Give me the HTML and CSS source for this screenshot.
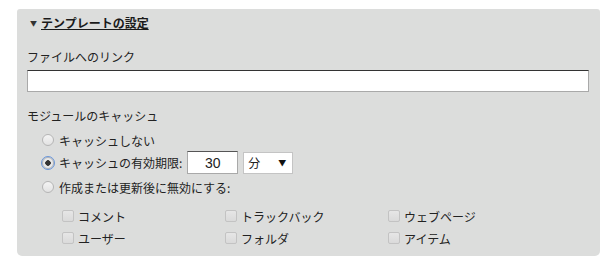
FILE: index.html
```html
<!DOCTYPE html>
<html>
  <head>
    <title>テンプレートの設定</title>
    <link rel="stylesheet" href="styles.css">
  </head>
  <body>
    <section class="panel">
      <h2 class="heading"><span class="arrow">▼</span><a href="#">テンプレートの設定</a></h2>

      <label class="label first">ファイルへのリンク</label>
      <input class="link-input" type="text">

      <div class="label second">モジュールのキャッシュ</div>
      <div class="options">
        <label class="opt row1"><input type="radio" name="cache"><span>キャッシュしない</span></label>
        <label class="opt row2"><input type="radio" name="cache" checked><span>キャッシュの有効期限:</span>
          <input class="num" type="text" value="30">
          <div class="select"><span>分</span><span class="caret">▼</span></div>
        </label>
        <label class="opt row3"><input type="radio" name="cache"><span>作成または更新後に無効にする:</span></label>
      </div>

      <div class="checks">
        <label class="chk"><input type="checkbox"><span>コメント</span></label>
        <label class="chk"><input type="checkbox"><span>トラックバック</span></label>
        <label class="chk"><input type="checkbox"><span>ウェブページ</span></label>
        <label class="chk"><input type="checkbox"><span>ユーザー</span></label>
        <label class="chk"><input type="checkbox"><span>フォルダ</span></label>
        <label class="chk"><input type="checkbox"><span>アイテム</span></label>
      </div>
    </section>
  </body>
</html>
```

FILE: styles.css
```css
body {
  margin: 0;
  font-family: "Noto Sans CJK JP", "Liberation Sans", sans-serif;
  font-size: 12px;
  color: #222;
  background: #fff;
}

.panel {
  margin: 9px 0 0 17px;
  width: 583px;
  height: 247px;
  box-sizing: border-box;
  padding: 4px 10px 0 10px;
  background: #dcdddc;
  border-radius: 3px 3px 5px 5px;
}

.heading {
  margin: 0;
  font-size: 12px;
  line-height: 20px;
  font-weight: bold;
  display: flex;
  align-items: center;
}

.heading .arrow {
  font-size: 7px;
  margin: 0 4px 0 3px;
  color: #333;
}

.heading a {
  color: #1a1a1a;
  text-decoration: underline;
}

.label {
  display: block;
  line-height: 18px;
}

.label.first {
  margin-top: 15px;
}

.label.second {
  margin-top: 14px;
  line-height: 20px;
}

.link-input {
  display: block;
  margin: 4px 0 0 0;
  width: 562px;
  height: 22px;
  box-sizing: border-box;
  border: 1px solid #a9a9a9;
  border-top-color: #333;
  background: #fff;
  padding: 0 4px;
}

.options {
  padding-left: 15px;
}

.opt {
  display: flex;
  align-items: center;
  height: 20px;
}

.opt.row1 {
  margin-top: 4px;
}

.opt.row2 {
  height: 23px;
  margin-top: 1px;
}

.opt.row3 {
  margin-top: 3px;
}

.opt input[type="radio"] {
  appearance: none;
  margin: 0 5px 0 0;
  width: 12px;
  height: 12px;
  border: 1px solid #b5b5b5;
  border-radius: 50%;
  background: linear-gradient(#f4f4f4, #e2e2e2);
  box-sizing: border-box;
}

.opt input[type="radio"]:checked {
  background: radial-gradient(circle, #333 0 2.5px, #e8e8e8 3px);
  outline: 1px solid #6d96d4;
  outline-offset: 0;
  box-shadow: 0 0 0 1px #c5d8f3;
}

.num {
  margin: 0 0 0 5px;
  width: 51px;
  height: 23px;
  box-sizing: border-box;
  border: 1px solid #a9a9a9;
  border-top-color: #555;
  background: #fff;
  text-align: center;
  font-family: "Liberation Sans", sans-serif;
  font-size: 14px;
  color: #222;
  padding: 0;
}

.select {
  margin-left: 5px;
  width: 50px;
  height: 22px;
  box-sizing: border-box;
  border: 1px solid #c4c4c4;
  background: #fff;
  display: flex;
  align-items: center;
  justify-content: space-between;
  padding: 0 6px 0 4px;
}

.select .caret {
  font-size: 8px;
  color: #111;
}

.checks {
  margin: 9px 0 0 35px;
  display: grid;
  grid-template-columns: 163px 163px 163px;
  row-gap: 2px;
}

.chk {
  display: flex;
  align-items: center;
  height: 20px;
}

.chk input[type="checkbox"] {
  appearance: none;
  margin: 0 4px 0 0;
  width: 12px;
  height: 12px;
  box-sizing: border-box;
  border: 1px solid #c3c3c3;
  border-radius: 2px;
  background: linear-gradient(#e6e6e6, #dadada);
}
```
